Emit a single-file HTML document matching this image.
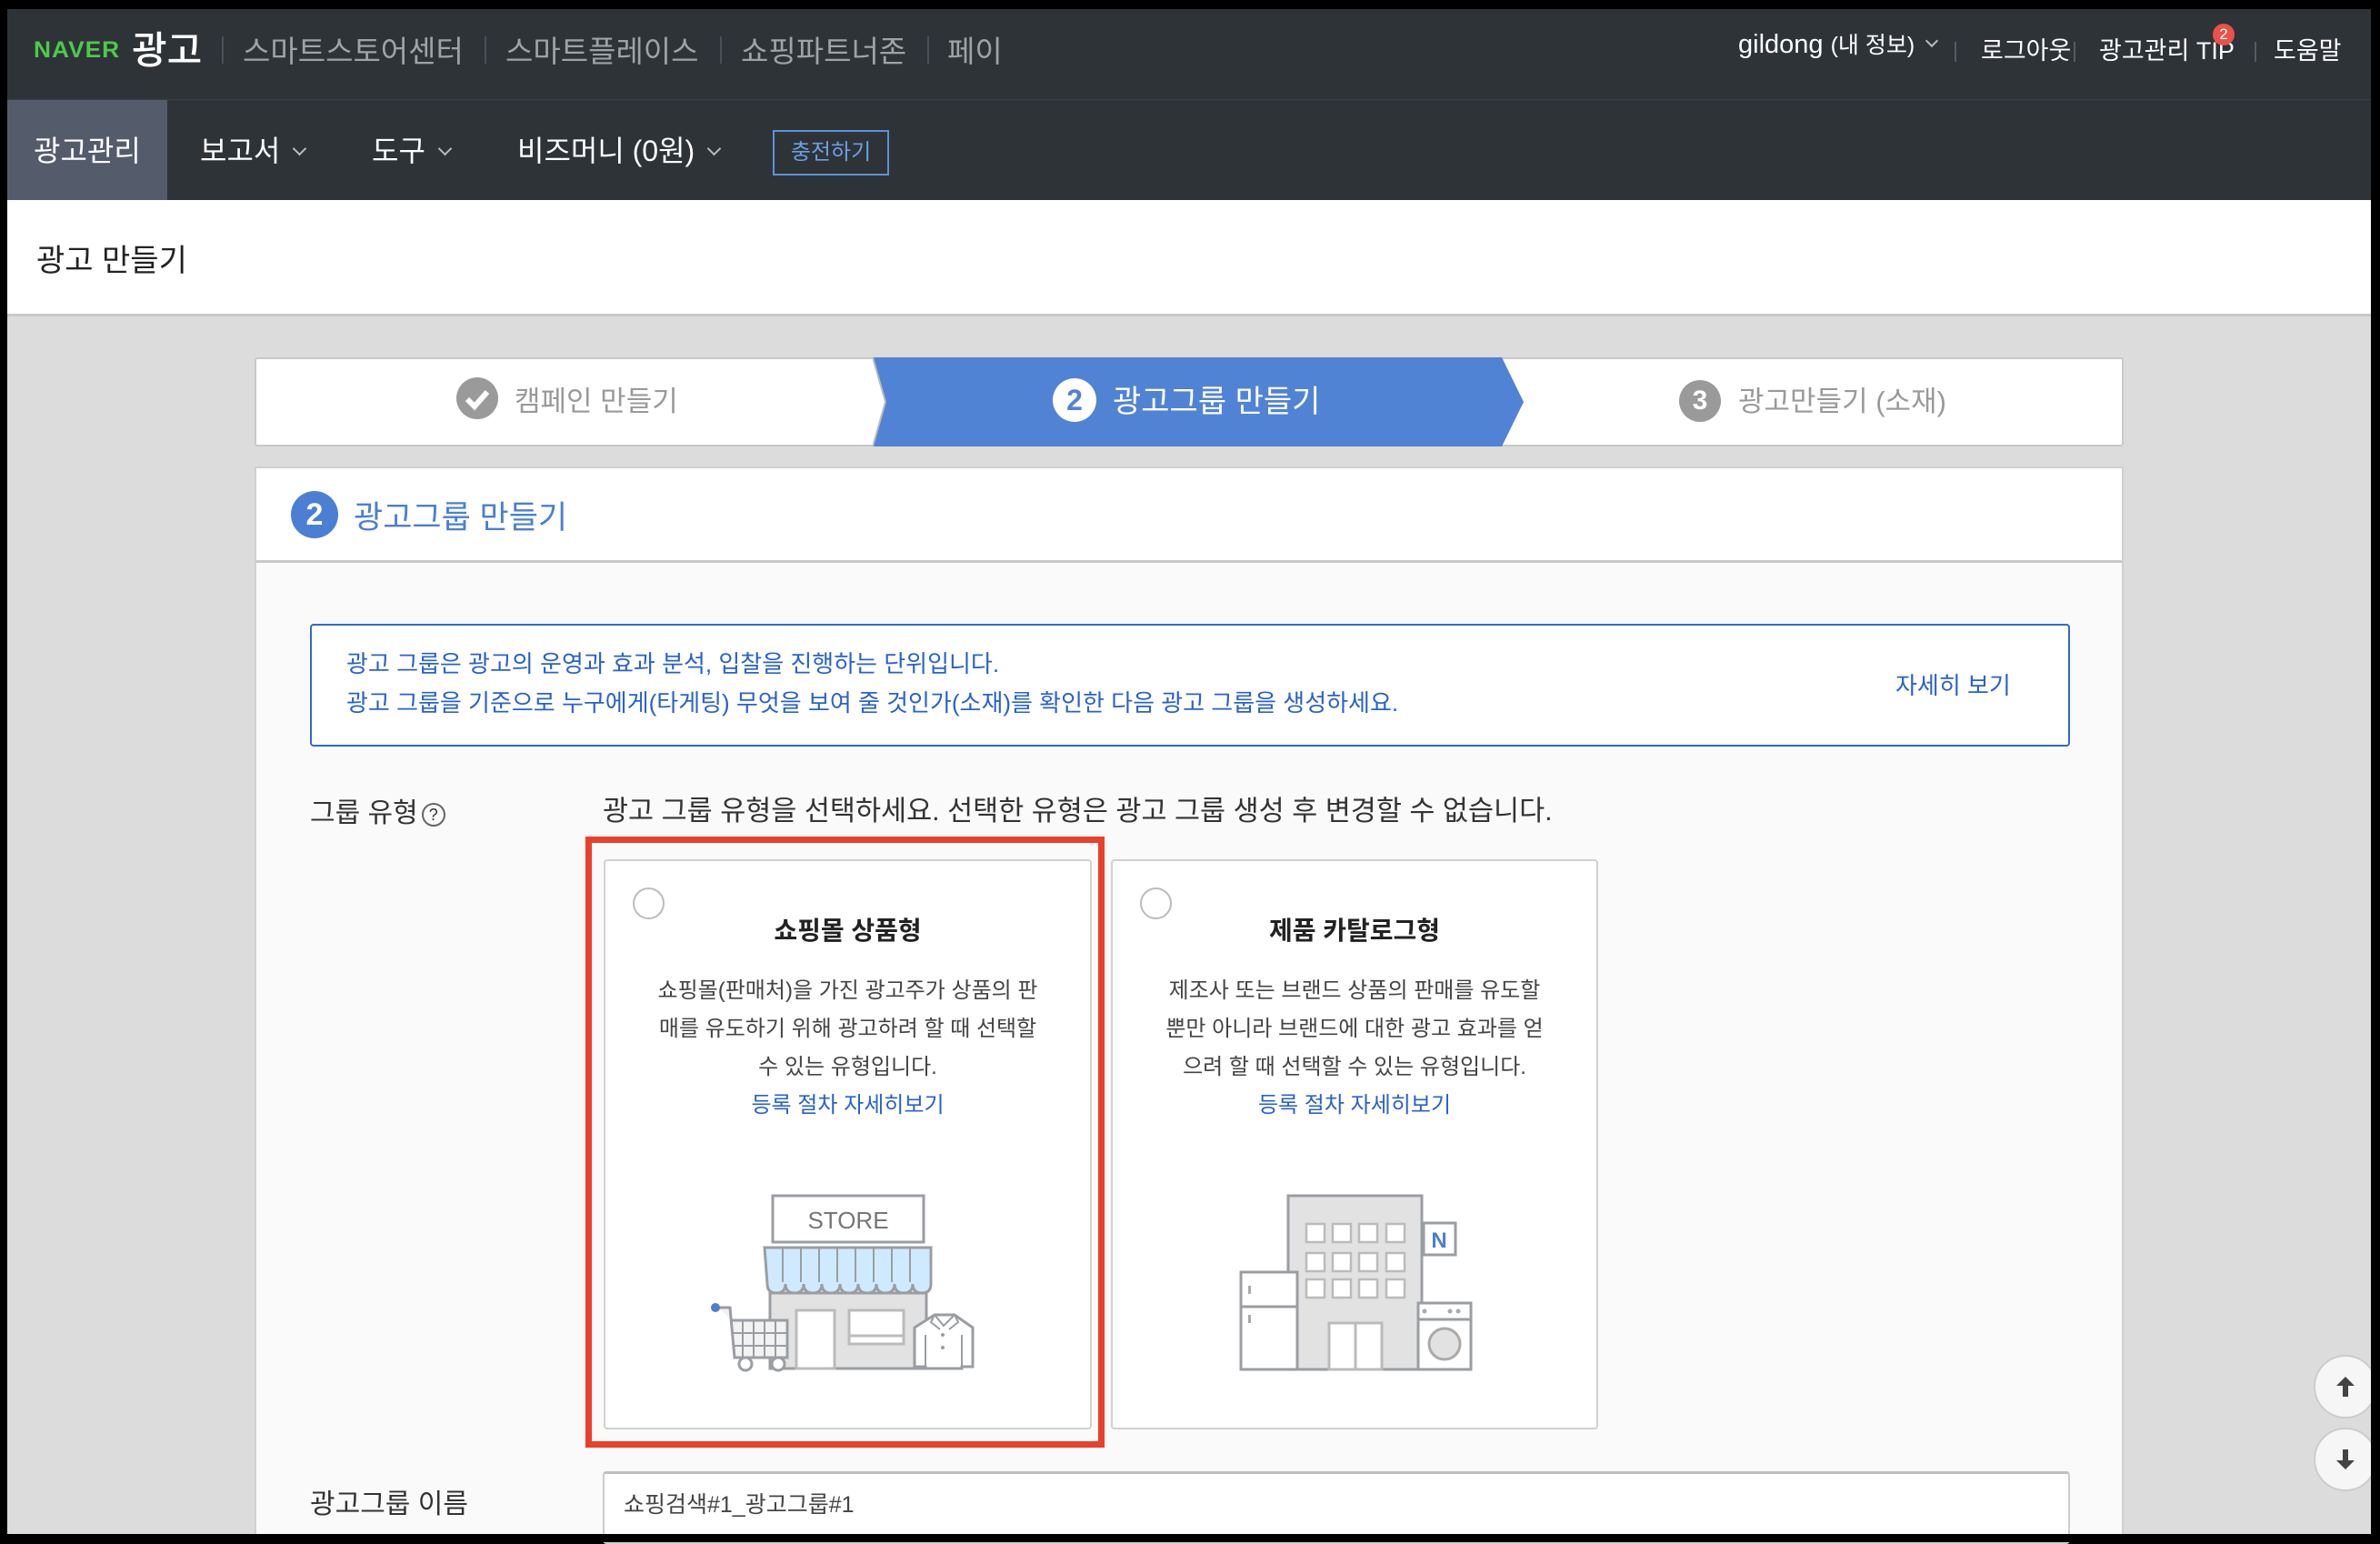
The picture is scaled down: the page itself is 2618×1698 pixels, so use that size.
<!DOCTYPE html>
<html><head><meta charset="utf-8">
<style>
*{margin:0;padding:0;box-sizing:border-box}
body{width:2618px;height:1696px;background:#000;position:relative;overflow:hidden;font-family:"Liberation Sans","Noto Sans CJK KR",sans-serif}
.a{position:absolute;white-space:nowrap}
.top{left:8px;top:10px;width:2600px;height:100px;background:#2e3338;border-bottom:1px solid #3a4046}
.nav{left:8px;top:110px;width:2600px;height:110px;background:#2e3338}
.title{left:8px;top:220px;width:2600px;height:128px;background:#fff;border-bottom:3px solid #c8c8c8}
.gray{left:8px;top:348px;width:2600px;height:1339px;background:#dcdcdc}
.tn{color:#a0a3a6;font-size:33px;top:30px}
.sep{width:2px;height:30px;background:#4a5056;top:40px}
.rt{color:#fff;font-size:27px;top:34px}
.rsep{width:2px;height:22px;background:#555b61;top:46px}
.nv{color:#fff;font-size:32px;top:141px}
.chev{display:inline-block;width:11px;height:11px;border-right:2px solid #bbb;border-bottom:2px solid #bbb;transform:rotate(45deg);margin-left:16px;position:relative;top:-8px}
.card{background:#fff;border:2px solid #d0d0d0;border-radius:4px}
.desc{font-size:24px;color:#444;text-align:center;line-height:42px}
.lnk{color:#2a62c9}
</style></head><body>
<div class="a top"></div>
<div class="a nav"></div>
<div class="a" style="left:8px;top:110px;width:176px;height:110px;background:#545b6a"></div>
<div class="a" style="left:37px;top:41px;color:#4fc94a;font-weight:900;font-size:25px;letter-spacing:1px;transform:scaleX(1.05);transform-origin:left">NAVER</div>
<div class="a" style="left:145px;top:22px;color:#fff;font-size:42px;font-weight:500">광고</div>
<div class="a sep" style="left:244px"></div>
<div class="a tn" style="left:267px">스마트스토어센터</div>
<div class="a sep" style="left:533px"></div>
<div class="a tn" style="left:556px">스마트플레이스</div>
<div class="a sep" style="left:792px"></div>
<div class="a tn" style="left:815px">쇼핑파트너존</div>
<div class="a sep" style="left:1020px"></div>
<div class="a tn" style="left:1042px">페이</div>
<div class="a rt" style="left:1912px;top:30px;font-size:29px">gildong <span style="font-size:25px">(내 정보)</span><span class="chev" style="width:10px;height:10px;margin-left:14px"></span></div>
<div class="a rsep" style="left:2150px"></div>
<div class="a rt" style="left:2179px">로그아웃</div>
<div class="a rsep" style="left:2281px"></div>
<div class="a rt" style="left:2309px">광고관리 TIP</div>
<div class="a" style="left:2434px;top:26px;width:24px;height:24px;border-radius:12px;background:#e8524a;color:#fff;font-size:17px;text-align:center;line-height:24px">2</div>
<div class="a rsep" style="left:2480px"></div>
<div class="a rt" style="left:2501px">도움말</div>
<div class="a nv" style="left:37px">광고관리</div>
<div class="a nv" style="left:220px">보고서<span class="chev"></span></div>
<div class="a nv" style="left:409px">도구<span class="chev"></span></div>
<div class="a nv" style="left:569px">비즈머니 (0원)<span class="chev"></span></div>
<div class="a" style="left:850px;top:143px;width:128px;height:50px;border:2px solid #5a93d6;color:#6aa0e0;font-size:24px;text-align:center;line-height:46px">충전하기</div>
<div class="a title"></div>
<div class="a" style="left:40px;top:259px;font-size:34px;color:#222">광고 만들기</div>
<div class="a gray"></div>
<div class="a" style="left:280px;top:393px;width:2056px;height:98px;background:#fff;border:2px solid #c8c8c8;border-radius:3px"></div>
<svg class="a" style="left:960px;top:393px" width="720" height="98"><polygon points="0,0 692,0 716,49 692,98 0,98 14,49" fill="#5083d4"/><polyline points="0,0 14,49 0,98" fill="none" stroke="#bbb" stroke-width="2"/></svg>
<svg class="a" style="left:502px;top:415px" width="46" height="46"><circle cx="23" cy="23" r="23" fill="#9a9a9a"/><polyline points="12,24 20,32 34,16" fill="none" stroke="#fff" stroke-width="6"/></svg>
<div class="a" style="left:566px;top:416px;font-size:31px;color:#999">캠페인 만들기</div>
<div class="a" style="left:1158px;top:416px;width:48px;height:48px;border-radius:24px;background:#fff;color:#5083d4;font-weight:bold;font-size:32px;text-align:center;line-height:48px">2</div>
<div class="a" style="left:1224px;top:414px;font-size:34px;color:#fff">광고그룹 만들기</div>
<div class="a" style="left:1847px;top:418px;width:46px;height:46px;border-radius:23px;background:#9a9a9a;color:#fff;font-weight:bold;font-size:30px;text-align:center;line-height:46px">3</div>
<div class="a" style="left:1912px;top:416px;font-size:31px;color:#999">광고만들기 (소재)</div>
<div class="a" style="left:280px;top:513px;width:2056px;height:1174px;background:#fafafa;border:2px solid #d0d0d0;border-bottom:none"></div>
<div class="a" style="left:282px;top:515px;width:2052px;height:104px;background:#fff;border-bottom:3px solid #c8c8c8"></div>
<div class="a" style="left:320px;top:540px;width:52px;height:52px;border-radius:26px;background:#4a7fd4;color:#fff;font-weight:bold;font-size:34px;text-align:center;line-height:52px">2</div>
<div class="a" style="left:389px;top:541px;font-size:35px;color:#4a7fd4">광고그룹 만들기</div>
<div class="a" style="left:341px;top:686px;width:1936px;height:135px;background:#fff;border:2px solid #2f6acb;border-radius:4px"></div>
<div class="a" style="left:381px;top:710px;font-size:26px;color:#2a62c9">광고 그룹은 광고의 운영과 효과 분석, 입찰을 진행하는 단위입니다.</div>
<div class="a" style="left:381px;top:753px;font-size:26px;color:#2a62c9">광고 그룹을 기준으로 누구에게(타게팅) 무엇을 보여 줄 것인가(소재)를 확인한 다음 광고 그룹을 생성하세요.</div>
<div class="a" style="left:2085px;top:734px;font-size:26px;color:#2a62c9">자세히 보기</div>
<div class="a" style="left:341px;top:869px;font-size:30px;color:#333">그룹 유형<span style="display:inline-block;width:26px;height:26px;border:2px solid #666;border-radius:13px;font-size:18px;text-align:center;line-height:22px;margin-left:4px;vertical-align:2px">?</span></div>
<div class="a" style="left:663px;top:867px;font-size:30.5px;color:#333">광고 그룹 유형을 선택하세요. 선택한 유형은 광고 그룹 생성 후 변경할 수 없습니다.</div>
<div class="a" style="left:644px;top:920px;width:571px;height:672px;border:7px solid #e8402a"></div>
<div class="a card" style="left:664px;top:945px;width:537px;height:627px"></div>
<div class="a card" style="left:1222px;top:945px;width:536px;height:627px"></div>
<div class="a" style="left:696px;top:976px;width:35px;height:35px;border-radius:18px;border:2px solid #bbb;background:#fff"></div>
<div class="a" style="left:1254px;top:976px;width:35px;height:35px;border-radius:18px;border:2px solid #bbb;background:#fff"></div>
<div class="a" style="left:664px;width:537px;top:1002px;text-align:center;font-size:28px;font-weight:bold;color:#222">쇼핑몰 상품형</div>
<div class="a" style="left:1222px;width:536px;top:1002px;text-align:center;font-size:28px;font-weight:bold;color:#222">제품 카탈로그형</div>
<div class="a desc" style="left:664px;width:537px;top:1069px">쇼핑몰(판매처)을 가진 광고주가 상품의 판<br>매를 유도하기 위해 광고하려 할 때 선택할<br>수 있는 유형입니다.<br><span class="lnk">등록 절차 자세히보기</span></div>
<div class="a desc" style="left:1222px;width:536px;top:1069px">제조사 또는 브랜드 상품의 판매를 유도할<br>뿐만 아니라 브랜드에 대한 광고 효과를 얻<br>으려 할 때 선택할 수 있는 유형입니다.<br><span class="lnk">등록 절차 자세히보기</span></div>
<svg class="a" style="left:0;top:0" width="2618" height="1696">
<g stroke="#9a9ea2" stroke-width="3">
<rect x="850" y="1315" width="166" height="51" fill="#fff"/>
<rect x="847" y="1422" width="172" height="83" fill="#e2e2e2"/>
<path d="M841,1372 H1024 V1412 q0,10 -10,10 q-10,0 -10,-10 q0,10 -10,10 q-10,0 -10,-10 q0,10 -10,10 q-10,0 -10,-10 q0,10 -10,10 q-10,0 -10,-10 q0,10 -10,10 q-10,0 -10,-10 q0,10 -10,10 q-10,0 -10,-10 q0,10 -10,10 q-10,0 -10,-10 q0,10 -10,10 q-10,0 -10,-10 q0,10 -10,10 q-10,0 -10,-10 Z" fill="#cfeaff"/>
<path d="M861,1372 V1410 M881,1372 V1410 M901,1372 V1410 M921,1372 V1410 M941,1372 V1410 M961,1372 V1410 M981,1372 V1410 M1001,1372 V1410" fill="none" stroke-width="2"/>
<rect x="876" y="1441" width="42" height="64" fill="#fff" stroke="#bbb"/>
<rect x="934" y="1441" width="60" height="37" fill="#fff" stroke="#bbb"/>
<line x1="934" y1="1469" x2="994" y2="1469" stroke="#bbb"/>
<path d="M790,1438 H803 L808,1493 H866 V1452 H805" fill="#f2f2f2"/>
<path d="M817,1452 V1493 M829,1452 V1493 M841,1452 V1493 M853,1452 V1493 M806,1466 H866 M807,1480 H866" fill="none" stroke-width="2"/>
<circle cx="820" cy="1500" r="7" fill="#fff"/><circle cx="856" cy="1500" r="7" fill="#fff"/>
<path d="M1006,1460 L1028,1446 H1050 L1070,1460 V1503 H1058 V1505 H1018 V1503 H1006 Z" fill="#fff"/>
<path d="M1028,1446 L1038,1458 L1050,1446 M1028,1446 L1024,1454 L1034,1462 M1050,1446 L1054,1454 L1044,1462 M1018,1468 V1503 M1058,1468 V1503" fill="none" stroke-width="2"/>
</g>
<circle cx="787" cy="1438" r="5" fill="#4a7fd4"/>
<circle cx="1037" cy="1468" r="2" fill="#9a9ea2"/><circle cx="1037" cy="1482" r="2" fill="#9a9ea2"/>
<text x="933" y="1351" font-family="Liberation Sans,sans-serif" font-size="26" fill="#777" text-anchor="middle">STORE</text>
<g stroke="#9a9ea2" stroke-width="3">
<rect x="1417" y="1315" width="147" height="191" fill="#e2e2e2"/>
<rect x="1566" y="1345" width="35" height="35" fill="#fff"/>
<rect x="1365" y="1399" width="62" height="107" fill="#fff"/>
<line x1="1365" y1="1437" x2="1427" y2="1437"/>
<rect x="1560" y="1433" width="58" height="73" fill="#fff"/>
<line x1="1560" y1="1451" x2="1618" y2="1451"/>
<circle cx="1589" cy="1478" r="17" fill="#e2e2e2" stroke="#aaa"/>
<rect x="1462" y="1455" width="58" height="51" fill="#fff" stroke="#bbb"/>
<line x1="1491" y1="1455" x2="1491" y2="1506" stroke="#bbb"/>
</g>
<g fill="#fff" stroke="#bbb" stroke-width="2.5">
<rect x="1437" y="1346" width="20" height="20"/><rect x="1466" y="1346" width="20" height="20"/><rect x="1495" y="1346" width="20" height="20"/><rect x="1525" y="1346" width="20" height="20"/>
<rect x="1437" y="1378" width="20" height="20"/><rect x="1466" y="1378" width="20" height="20"/><rect x="1495" y="1378" width="20" height="20"/><rect x="1525" y="1378" width="20" height="20"/>
<rect x="1437" y="1407" width="20" height="20"/><rect x="1466" y="1407" width="20" height="20"/><rect x="1495" y="1407" width="20" height="20"/><rect x="1525" y="1407" width="20" height="20"/>
</g>
<rect x="1373" y="1414" width="3" height="9" fill="#aaa"/><rect x="1373" y="1446" width="3" height="9" fill="#aaa"/>
<circle cx="1567" cy="1442" r="2.5" fill="#aaa"/><circle cx="1595" cy="1442" r="2.5" fill="#aaa"/><circle cx="1604" cy="1442" r="2.5" fill="#aaa"/>
<text x="1583" y="1372" font-family="Liberation Sans,sans-serif" font-size="24" font-weight="bold" fill="#4a7fd4" text-anchor="middle">N</text>
</svg>
<div class="a" style="left:341px;top:1629px;font-size:30px;color:#333">광고그룹 이름</div>
<div class="a" style="left:663px;top:1618px;width:1614px;height:80px;background:#fff;border:2px solid #ccc;border-top:3px solid #c0c0c0;border-radius:4px"></div>
<div class="a" style="left:686px;top:1635px;font-size:25px;color:#444">쇼핑검색#1_광고그룹#1</div>
<div class="a" style="left:2545px;top:1490px;width:70px;height:70px;border-radius:35px;background:#f6f6f6;border:2px solid #ccc"></div>
<div class="a" style="left:2545px;top:1570px;width:70px;height:70px;border-radius:35px;background:#f6f6f6;border:2px solid #ccc"></div>
<svg class="a" style="left:2568px;top:1512px" width="24" height="26"><path d="M12,2 L22,12 H15 V24 H9 V12 H2 Z" fill="#444"/></svg>
<svg class="a" style="left:2568px;top:1592px" width="24" height="26"><path d="M12,24 L22,14 H15 V2 H9 V14 H2 Z" fill="#444"/></svg>
<div class="a" style="left:0;top:0;width:2618px;height:10px;background:#000"></div>
<div class="a" style="left:0;top:0;width:8px;height:1696px;background:#000"></div>
<div class="a" style="left:2608px;top:0;width:10px;height:1696px;background:#000"></div>
<div class="a" style="left:0;top:1687px;width:2618px;height:9px;background:#000"></div>
</body></html>
